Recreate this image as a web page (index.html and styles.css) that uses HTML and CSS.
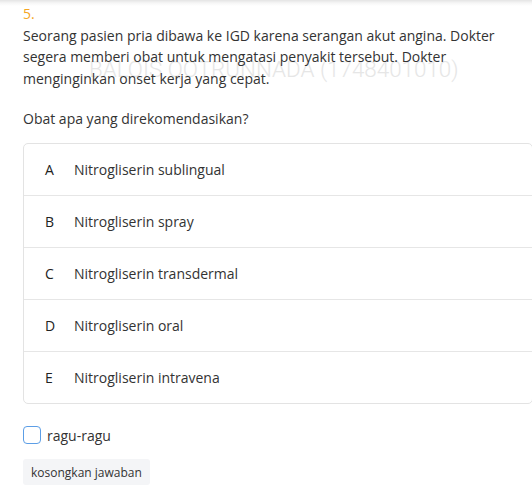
FILE: index.html
```html
<!DOCTYPE html>
<html lang="id">
<head>
<meta charset="utf-8">
<link rel="stylesheet" href="styles.css">
</head>
<body>
<div class="page">
  <div class="question">
    <div class="watermark">BALQIS QOTRUNNADA (1748401010)</div>
    <div class="num">5.</div>
    <p class="stem">Seorang pasien pria dibawa ke IGD karena serangan akut angina. Dokter segera memberi obat untuk mengatasi penyakit tersebut. Dokter menginginkan onset kerja yang cepat.</p>
    <p class="ask">Obat apa yang direkomendasikan?</p>
  </div>
  <div class="options">
    <div class="opt"><span class="letter">A</span><span class="text">Nitrogliserin sublingual</span></div>
    <div class="opt"><span class="letter">B</span><span class="text">Nitrogliserin spray</span></div>
    <div class="opt"><span class="letter">C</span><span class="text">Nitrogliserin transdermal</span></div>
    <div class="opt"><span class="letter">D</span><span class="text">Nitrogliserin oral</span></div>
    <div class="opt"><span class="letter">E</span><span class="text">Nitrogliserin intravena</span></div>
  </div>
  <label class="doubt"><span class="box"></span><span>ragu-ragu</span></label>
  <button class="clear">kosongkan jawaban</button>
</div>
</body>
</html>
```
FILE: styles.css
```css
html, body {
  margin: 0;
  padding: 0;
  background: #fff;
}
body {
  width: 532px;
  height: 492px;
  overflow: hidden;
  font-family: "Open Sans", "Noto Sans", sans-serif;
  font-size: 14px;
  color: #333;
  background: linear-gradient(#e4e4e4, #f6f6f6 3px, #fff 6px) no-repeat;
}
.page {
  padding: 3px 0 0 23px;
}
.question {
  position: relative;
  line-height: 21.5px;
  padding-right: 20px;
}
.watermark {
  position: absolute;
  left: 66px;
  top: 55px;
  font-family: Roboto, "Liberation Sans", sans-serif;
  font-weight: 300;
  font-size: 22.4px;
  line-height: 22px;
  color: #e6e6e6;
  white-space: nowrap;
  pointer-events: none;
}
.num {
  position: relative;
  color: #f5a623;
}
.stem, .ask {
  position: relative;
  margin: 0;
}
.ask {
  margin-top: 18.5px;
}
.options {
  margin-top: 14px;
  width: 510px;
  border: 1px solid #e3e3e3;
  border-radius: 5px;
  box-sizing: border-box;
}
.opt {
  display: flex;
  align-items: center;
  height: 52px;
  border-top: 1px solid #e6e6e6;
  box-sizing: border-box;
  padding-left: 21px;
}
.opt:first-child {
  border-top: none;
  height: 51px;
}
.letter {
  width: 29px;
  color: #222;
}
.text {
  color: #333;
}
.doubt {
  display: flex;
  align-items: center;
  gap: 6px;
  margin-top: 22px;
  height: 18px;
  font-size: 14px;
  color: #333;
}
.box {
  width: 18px;
  height: 18px;
  box-sizing: border-box;
  border: 1.5px solid #5c9ee6;
  border-radius: 4px;
}
.clear {
  display: block;
  margin-top: 15px;
  height: 26px;
  padding: 0 8px;
  border: none;
  border-radius: 3px;
  background: #f4f5f7;
  font-family: "Open Sans", "Noto Sans", sans-serif;
  font-size: 12px;
  color: #333;
}
```
